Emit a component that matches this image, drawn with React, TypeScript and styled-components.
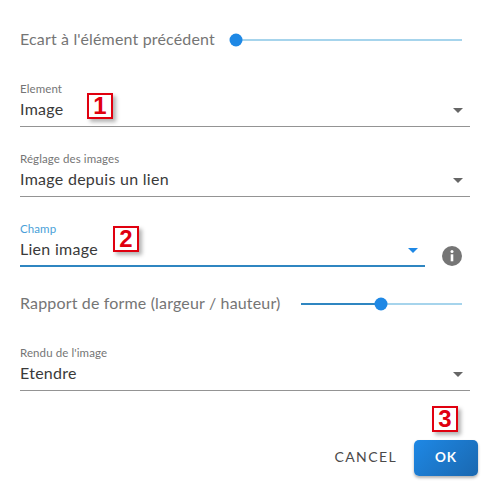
import React from 'react';
import styled, { createGlobalStyle } from 'styled-components';

const GlobalStyle = createGlobalStyle`
  html, body {
    margin: 0;
    padding: 0;
    background: #ffffff;
  }
  body {
    font-family: 'Lato', 'Noto Sans', sans-serif;
  }
`;

const Dialog = styled.div`
  width: 492px;
  height: 481px;
  box-sizing: border-box;
  padding: 20px 14px 0 20px;
  display: flex;
  flex-direction: column;
  overflow: hidden;
`;

const SliderRow = styled.div`
  display: flex;
  align-items: center;
  height: 40px;
  padding-right: 16px;
  margin-bottom: 21px;
`;

const SliderLabel = styled.span<{ $width: number }>`
  width: ${(props) => props.$width}px;
  flex: none;
  padding-bottom: 3px;
  font-size: 16px;
  letter-spacing: 0.16px;
  color: #757575;
  white-space: nowrap;
`;

const Track = styled.div`
  position: relative;
  flex: 1;
  height: 2px;
  background: #a6d4ec;
`;

const TrackFill = styled.div`
  height: 100%;
  background: #2f86c1;
`;

const Thumb = styled.div`
  position: absolute;
  top: 50%;
  width: 13px;
  height: 13px;
  border-radius: 50%;
  background: #1e88e5;
  transform: translate(-50%, -50%);
`;

const FieldRow = styled.div<{ $after?: number }>`
  display: flex;
  align-items: flex-start;
  gap: 17px;
  padding-right: 8px;
  margin-bottom: ${(props) => props.$after ?? 24}px;
`;

const Field = styled.div<{ $focused?: boolean }>`
  position: relative;
  flex: 1;
  height: 46px;
  box-sizing: border-box;
  padding-top: 1px;
  border-bottom: ${(props) =>
    props.$focused ? '2px solid #2f86c1' : '1px solid #949494'};
`;

const FieldLabel = styled.div<{ $focused?: boolean }>`
  font-size: 11.5px;
  line-height: 14px;
  letter-spacing: 0.1px;
  color: ${(props) => (props.$focused ? '#4a9fd8' : '#757575')};
`;

const FieldValue = styled.div`
  margin-top: 2px;
  font-size: 16px;
  line-height: 22px;
  letter-spacing: 0.28px;
  color: #3a3a3a;
`;

const Arrow = styled.svg<{ $focused?: boolean }>`
  position: absolute;
  right: 7px;
  top: 27px;
  width: 10px;
  height: 5px;
  fill: ${(props) => (props.$focused ? '#1e88e5' : '#666666')};
`;

const InfoIcon = styled.svg`
  flex: none;
  width: 20px;
  height: 20px;
  margin-top: 25px;
  margin-right: 8px;
`;

const Marker = styled.div<{ $left: number; $top: number }>`
  position: absolute;
  left: ${(props) => props.$left}px;
  top: ${(props) => props.$top}px;
  width: 26px;
  height: 26px;
  box-sizing: border-box;
  border: 2.5px solid #e0000f;
  background: #ffffff;
  box-shadow: 3px 3px 4px rgba(0, 0, 0, 0.3);
  display: flex;
  align-items: center;
  justify-content: center;
  font-family: 'Liberation Sans', sans-serif;
  font-size: 24px;
  font-weight: 700;
  line-height: 1;
  color: #e0000f;
`;

const Actions = styled.div`
  position: relative;
  display: flex;
  justify-content: flex-end;
  align-items: center;
  gap: 17px;
  margin-top: 25px;
`;

const CancelButton = styled.button`
  border: none;
  background: none;
  padding: 0 0 3px;
  font-family: inherit;
  font-size: 14px;
  letter-spacing: 1.4px;
  color: #4a4a4a;
`;

const OkButton = styled.button`
  width: 64px;
  height: 36px;
  border: none;
  border-radius: 5px;
  padding: 0 0 2px;
  background: linear-gradient(135deg, #1e88e5, #1a68b0);
  box-shadow: 0 2px 3px rgba(0, 0, 0, 0.3);
  font-family: inherit;
  font-size: 13.5px;
  font-weight: 700;
  letter-spacing: 1px;
  color: #ffffff;
`;

const Slider = ({ value }: { value: number }) => (
  <Track>
    <TrackFill style={{ width: `${value}%` }} />
    <Thumb style={{ left: `${value}%` }} />
  </Track>
);

const Select = ({
  label,
  value,
  focused,
  children,
}: {
  label: string;
  value: string;
  focused?: boolean;
  children?: React.ReactNode;
}) => (
  <Field $focused={focused}>
    <FieldLabel $focused={focused}>{label}</FieldLabel>
    <FieldValue>{value}</FieldValue>
    <Arrow $focused={focused} viewBox="0 0 10 5">
      <path d="M0 0h10L5 5z" />
    </Arrow>
    {children}
  </Field>
);

export default function App() {
  return (
    <>
      <GlobalStyle />
      <Dialog>
        <SliderRow>
          <SliderLabel $width={216}>Ecart à l'élément précédent</SliderLabel>
          <Slider value={0} />
        </SliderRow>
        <FieldRow>
          <Select label="Element" value="Image">
            <Marker $left={67} $top={12}>1</Marker>
          </Select>
        </FieldRow>
        <FieldRow>
          <Select label="Réglage des images" value="Image depuis un lien" />
        </FieldRow>
        <FieldRow $after={17}>
          <Select label="Champ" value="Lien image" focused>
            <Marker $left={93} $top={5}>2</Marker>
          </Select>
          <InfoIcon viewBox="0 0 20 20">
            <circle cx="10" cy="10" r="10" fill="#757575" />
            <circle cx="10" cy="5.6" r="1.5" fill="#ffffff" />
            <rect x="8.7" y="8.3" width="2.6" height="7" fill="#ffffff" />
          </InfoIcon>
        </FieldRow>
        <SliderRow>
          <SliderLabel $width={280.5}>Rapport de forme (largeur / hauteur)</SliderLabel>
          <Slider value={50} />
        </SliderRow>
        <FieldRow>
          <Select label="Rendu de l'image" value="Etendre" />
        </FieldRow>
        <Actions>
          <CancelButton>CANCEL</CancelButton>
          <OkButton>OK</OkButton>
          <Marker $left={412} $top={-34}>3</Marker>
        </Actions>
      </Dialog>
    </>
  );
}
